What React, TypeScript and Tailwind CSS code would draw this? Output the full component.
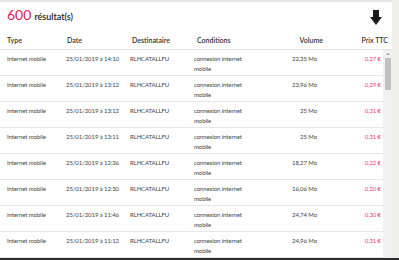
import React from 'react';

const rows = [
  { date: '25/01/2019 à 14:10', volume: '22,35 Mo', price: '0,27 €' },
  { date: '25/01/2019 à 13:12', volume: '23,96 Mo', price: '0,29 €' },
  { date: '25/01/2019 à 13:12', volume: '25 Mo', price: '0,31 €' },
  { date: '25/01/2019 à 13:11', volume: '25 Mo', price: '0,31 €' },
  { date: '25/01/2019 à 12:36', volume: '18,27 Mo', price: '0,22 €' },
  { date: '25/01/2019 à 12:30', volume: '16,06 Mo', price: '0,20 €' },
  { date: '25/01/2019 à 11:46', volume: '24,74 Mo', price: '0,30 €' },
  { date: '25/01/2019 à 11:12', volume: '24,96 Mo', price: '0,31 €' },
];

const DownloadArrow = () => (
  <svg width="12" height="15" viewBox="0 0 12 15">
    <rect x="3" y="0" width="6" height="8" fill="#1a1a1a" />
    <polygon points="0,7 12,7 6,15" fill="#1a1a1a" />
  </svg>
);

export default function App() {
  return <div className="w-[399px] h-[260px] bg-[#efeee9] flex flex-col overflow-hidden" style={{ fontFamily: 'Lato, "Open Sans", sans-serif' }}>
      <div className="flex flex-1 min-h-0">
        <div className="w-[392px] bg-white border-t-2 border-[#e4e4e4] flex flex-col">
          {/* Title */}
          <div className="flex items-end justify-between pl-[7px] pr-[10px] h-[20px]">
            <div className="flex items-baseline gap-[3px]">
              <span className="text-[14px] leading-none text-[#e2195d]">600</span>
              <span className="text-[9px] leading-none font-semibold text-[#222]">résultat(s)</span>
            </div>
            <div className="mb-[-3px]">
              <DownloadArrow />
            </div>
          </div>
          {/* Column headers */}
          <div className="flex items-center h-[28px] pl-[7px] pr-[4px] pt-[9px] border-b border-[#e2e2e2] text-[7px] font-semibold text-[#333]">
            <div className="w-[60px]">Type</div>
            <div className="w-[65px]">Date</div>
            <div className="w-[65px]">Destinataire</div>
            <div className="w-[80px]">Conditions</div>
            <div className="w-[46px] text-right">Volume</div>
            <div className="flex-1 text-right">Prix TTC</div>
          </div>
          {/* Body */}
          <div className="flex flex-1 min-h-0">
            <div className="flex-1 overflow-hidden">
              {rows.map((r, i) => <div key={i} className="flex h-[26px] pl-[7px] pr-[2px] pt-[4px] border-b border-[#e6e6e6] text-[6px] tracking-[-0.1px] leading-[10px] text-[#444]">
                  <div className="w-[59px]">Internet mobile</div>
                  <div className="w-[64px]">{r.date}</div>
                  <div className="w-[64px]">RLHCATALLFU</div>
                  <div className="w-[62px]">connexion internet<br />mobile</div>
                  <div className="w-[61px] text-right">{r.volume}</div>
                  <div className="flex-1 text-right text-[#ee3b6e]">{r.price}</div>
                </div>)}
            </div>
            {/* Scrollbar */}
            <div className="w-[9px] bg-[#f1f1f1] flex flex-col items-center">
              <div className="h-[8px] flex items-center justify-center">
                <div className="w-0 h-0 border-l-[2px] border-r-[2px] border-b-[2px] border-l-transparent border-r-transparent border-b-[#a3a3a3]" />
              </div>
              <div className="w-[6px] h-[32px] bg-[#c1c1c1]" />
            </div>
          </div>
        </div>
        <div className="flex-1" />
      </div>
      <div className="h-[2px] bg-[#2b2b2b]" />
    </div>;
}
